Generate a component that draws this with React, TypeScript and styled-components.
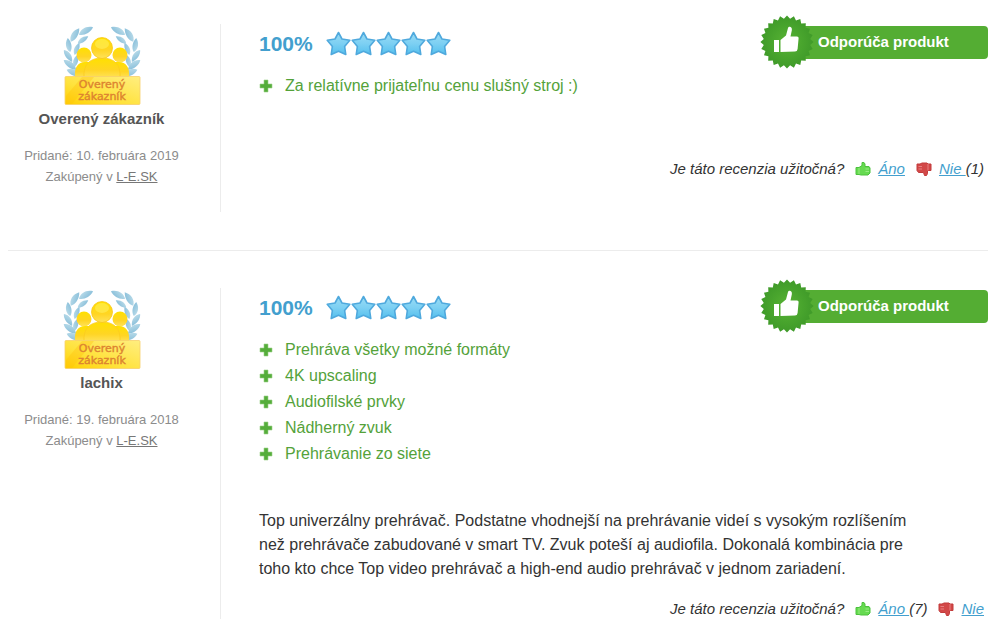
import React from 'react';
import styled, { createGlobalStyle } from 'styled-components';

const GlobalStyle = createGlobalStyle`
  * { box-sizing: border-box; }
  body {
    margin: 0;
    background: #fff;
    color: #333;
    font-family: "Liberation Sans", Arial, sans-serif;
    font-size: 16px;
  }
`;

const Page = styled.main`
  padding: 24px 13px 0 8px;
`;

const Review = styled.article`
  display: flex;
  align-items: stretch;

  & + & {
    margin-top: 38px;
    padding-top: 37px;
    border-top: 1px solid #ececec;
  }
`;

const Author = styled.aside`
  flex: 0 0 212px;
  padding-right: 25px;
  display: flex;
  flex-direction: column;
  align-items: center;
  text-align: center;
`;

const Name = styled.h3`
  margin: 4px 0 16px;
  font-size: 15px;
  line-height: 20px;
  font-weight: bold;
  color: #555;
`;

const Meta = styled.p`
  margin: 0;
  font-size: 13px;
  line-height: 21px;
  color: #8c8c8c;
`;

const ShopLink = styled.a`
  color: #777;
`;

const Body = styled.div`
  flex: 1;
  min-width: 0;
  border-left: 1px solid #ececec;
  padding-left: 38px;
  display: flex;
  flex-direction: column;
`;

const Top = styled.header`
  display: flex;
  justify-content: space-between;
  align-items: flex-start;
  height: 49px;
`;

const Rating = styled.div`
  display: flex;
  align-items: center;
  gap: 13px;
  height: 39px;
`;

const Percent = styled.span`
  font-size: 21px;
  font-weight: bold;
  color: #439fce;
`;

const Stars = styled.span`
  display: flex;
`;

const Recommend = styled.div`
  position: relative;
  width: 212px;
  height: 33px;
  margin-top: 2px;
  padding-left: 42px;
  border-radius: 4px;
  background: #54ad33;
  color: #fff;
  font-size: 15px;
  line-height: 32px;
  font-weight: bold;
`;

const Seal = styled.svg`
  position: absolute;
  left: -16px;
  top: -11px;
`;

const Pros = styled.ul`
  list-style: none;
  margin: 0;
  padding: 0;
`;

const Pro = styled.li`
  display: flex;
  align-items: center;
  gap: 12px;
  line-height: 26px;
  color: #54a23a;
`;

const Comment = styled.p`
  max-width: 664px;
  margin: 42px 0 0;
  line-height: 24px;
`;

const Feedback = styled.footer<{ $offset: number; $bottom: number }>`
  display: flex;
  justify-content: flex-end;
  align-items: center;
  margin-top: ${p => p.$offset}px;
  margin-bottom: ${p => p.$bottom}px;
  padding-right: 4px;
  font-size: 15px;
  line-height: 20px;
  font-style: italic;
`;

const Vote = styled.span`
  display: inline-flex;
  align-items: center;
  gap: 7px;
  margin-left: 11px;
`;

const VoteLink = styled.a`
  color: #439fce;
  white-space: pre;
`;

const Leaf = ({ x, y, r, s = 1 }: { x: number; y: number; r: number; s?: number }) => (
  <path
    d="M-8 0C-4-4.500 3-4.500 8 0C3 3.500-4 3.500-8 0Z"
    transform={`translate(${x} ${y}) rotate(${r}) scale(${s})`}
  />
);

const Laurel = () => (
  <>
    <Leaf x={24} y={7} r={-28} />
    <Leaf x={13} y={11} r={-58} />
    <Leaf x={21} y={16} r={-35} s={0.8} />
    <Leaf x={7} y={21} r={-100} s={0.9} />
    <Leaf x={15} y={25} r={-68} s={0.8} />
    <Leaf x={6} y={32} r={55} s={0.9} />
    <Leaf x={14} y={37} r={-75} s={0.8} />
    <Leaf x={8} y={41} r={38} />
    <Leaf x={12} y={49} r={24} />
  </>
);

const CustomerBadge = () => (
  <svg width="80" height="81" viewBox="0 0 80 81" role="img" aria-label="Overený zákazník">
    <defs>
      <linearGradient id="gold" x1="0" y1="0" x2="0" y2="1">
        <stop offset="0" stopColor="#ffe000" />
        <stop offset=".6" stopColor="#ffd524" />
        <stop offset="1" stopColor="#ffe25a" />
      </linearGradient>
      <linearGradient id="plate" x1="0" y1="1" x2="1" y2="0">
        <stop offset="0" stopColor="#ffcf00" />
        <stop offset=".4" stopColor="#ffe23c" />
        <stop offset="1" stopColor="#ffee80" />
      </linearGradient>
      <linearGradient id="laurel" x1="0" y1="0" x2="1" y2="1">
        <stop offset="0" stopColor="#c0dfeb" />
        <stop offset="1" stopColor="#82bbd8" />
      </linearGradient>
    </defs>
    <g fill="url(#laurel)">
      <Laurel />
      <g transform="translate(80 0) scale(-1 1)"><Laurel /></g>
    </g>
    <g fill="url(#gold)">
      <circle cx="22" cy="31" r="7.500" />
      <circle cx="58" cy="31" r="7.500" />
      <path d="M13 54C12 43 16 38 23 38H57C64 38 68 43 67 54Z" />
      <path d="M22 54C21 40 28 34 40 34S59 40 58 54Z" stroke="#fbcb20" strokeWidth=".8" />
      <circle cx="40" cy="24" r="10.500" stroke="#f9c818" strokeWidth=".8" />
    </g>
    <ellipse cx="40" cy="20" rx="7" ry="5" fill="#fff36a" opacity=".5" />
    <rect x="3" y="52.500" width="75" height="28" rx="1" fill="url(#plate)" stroke="#f8cf6a" strokeWidth=".8" />
    <path d="M4 80V72L20 53H32L10 80Z" fill="#ffbf0c" opacity=".35" />
    <g fill="#dd8430" stroke="#dd8430" strokeWidth=".4" fontFamily="DejaVu Sans, sans-serif" fontSize="11" textAnchor="middle">
      <text x="40" y="64">Overený</text>
      <text x="40" y="76">zákazník</text>
    </g>
  </svg>
);

const Star = () => (
  <svg width="25" height="25" viewBox="0 0 25 25" aria-hidden="true">
    <defs>
      <linearGradient id="star" x1="0" y1="0" x2="0" y2="1">
        <stop offset="0" stopColor="#9adcf5" />
        <stop offset=".5" stopColor="#7dd0f3" />
        <stop offset="1" stopColor="#54c0ee" />
      </linearGradient>
    </defs>
    <path
      d="M12.500 1.500L16 8L23.800 9.300L18.600 15.400L19.800 23.500L12.500 20.200L5.200 23.500L6.400 15.400L1.200 9.300L9 8Z"
      fill="url(#star)"
      stroke="#4fa9dd"
      strokeWidth="1.600"
      strokeLinejoin="round"
    />
  </svg>
);

const Plus = () => (
  <svg width="14" height="14" viewBox="0 0 14 14" aria-hidden="true">
    <path d="M5 1H9V5H13V9H9V13H5V9H1V5H5Z" fill="#55ad3b" stroke="#9ad286" strokeWidth=".6" />
  </svg>
);

const sealPoints = Array.from({ length: 48 }, (_, i) => {
  const radius = i % 2 ? 23.4 : 26.6;
  const angle = (i * Math.PI) / 24 - Math.PI / 2;
  return `${(27 + radius * Math.cos(angle)).toFixed(1)},${(27 + radius * Math.sin(angle)).toFixed(1)}`;
}).join(' ');

const RecommendSeal = () => (
  <Seal width="54" height="54" viewBox="0 0 54 54" aria-hidden="true">
    <defs>
      <radialGradient id="seal">
        <stop offset="0" stopColor="#58b334" />
        <stop offset=".6" stopColor="#48a42d" />
        <stop offset="1" stopColor="#3f9a29" />
      </radialGradient>
    </defs>
    <polygon points={sealPoints} fill="url(#seal)" />
    <g fill="#fff">
      <rect x="14" y="25" width="5" height="12" />
      <path d="M20.500 25L26 20.500L28 13Q28.500 11.300 30 11.800Q32.300 12.500 31.800 15.500L30.500 21.500H37Q38.800 21.500 38.600 23.300L37.600 34Q37.300 36.500 35 36.500L20.500 37Z" />
    </g>
  </Seal>
);

const Thumb = ({ down = false }: { down?: boolean }) => (
  <svg width="16" height="16" viewBox="0 0 16 16" aria-hidden="true">
    {down ? (
      <>
        <path
          d="M1 3H4L6 2H11L12 3H15V9.500H11.500V12.500L10.500 14.500H8.500L7.500 11.500H2.500L1 9.500Z"
          fill="#d24848"
          stroke="#c23b3b"
          strokeLinejoin="round"
        />
        <path d="M12 3V9.500M2.500 5.500H6M2.500 8H6" stroke="#e88080" fill="none" />
      </>
    ) : (
      <>
        <path
          d="M1 6.500H4L7 4.500V1.500H9L10 3V5.500H14L15 7V12L13 14H6L4 13.500H1Z"
          fill="#66da50"
          stroke="#4cc23c"
          strokeLinejoin="round"
        />
        <path d="M4 7V13M10.500 8H14M10.500 10.500H14" stroke="#96ec80" fill="none" />
      </>
    )}
  </svg>
);

interface ReviewData {
  name: string;
  date: string;
  pros: string[];
  comment?: string;
  yes?: number;
  no?: number;
}

const reviews: ReviewData[] = [
  {
    name: 'Overený zákazník',
    date: '10. februára 2019',
    pros: ['Za relatívne prijateľnu cenu slušný stroj :)'],
    no: 1,
  },
  {
    name: 'lachix',
    date: '19. februára 2018',
    pros: ['Prehráva všetky možné formáty', '4K upscaling', 'Audiofilské prvky', 'Nádherný zvuk', 'Prehrávanie zo siete'],
    comment:
      'Top univerzálny prehrávač. Podstatne vhodnejší na prehrávanie videí s vysokým rozlíšením než prehrávače zabudované v smart TV. Zvuk poteší aj audiofila. Dokonalá kombinácia pre toho kto chce Top video prehrávač a high-end audio prehrávač v jednom zariadení.',
    yes: 7,
  },
];

const VoteOption = ({ label, count, down }: { label: string; count?: number; down?: boolean }) => (
  <Vote>
    <Thumb down={down} />
    <span>
      <VoteLink href="#">{count ? `${label} ` : label}</VoteLink>
      {count ? `(${count})` : null}
    </span>
  </Vote>
);

export default function App() {
  return (
    <>
      <GlobalStyle />
      <Page>
        {reviews.map(review => (
          <Review key={review.name}>
            <Author>
              <CustomerBadge />
              <Name>{review.name}</Name>
              <Meta>Pridané: {review.date}</Meta>
              <Meta>
                Zakúpený v <ShopLink href="#">L-E.SK</ShopLink>
              </Meta>
            </Author>
            <Body>
              <Top>
                <Rating>
                  <Percent>100%</Percent>
                  <Stars role="img" aria-label="5 z 5">
                    {[1, 2, 3, 4, 5].map(n => <Star key={n} />)}
                  </Stars>
                </Rating>
                <Recommend>
                  <RecommendSeal />
                  Odporúča produkt
                </Recommend>
              </Top>
              <Pros>
                {review.pros.map(pro => (
                  <Pro key={pro}><Plus />{pro}</Pro>
                ))}
              </Pros>
              {review.comment && <Comment>{review.comment}</Comment>}
              <Feedback $offset={review.comment ? 18 : 60} $bottom={review.comment ? 0 : 33}>
                Je táto recenzia užitočná?
                <VoteOption label="Áno" count={review.yes} />
                <VoteOption label="Nie" count={review.no} down />
              </Feedback>
            </Body>
          </Review>
        ))}
      </Page>
    </>
  );
}
